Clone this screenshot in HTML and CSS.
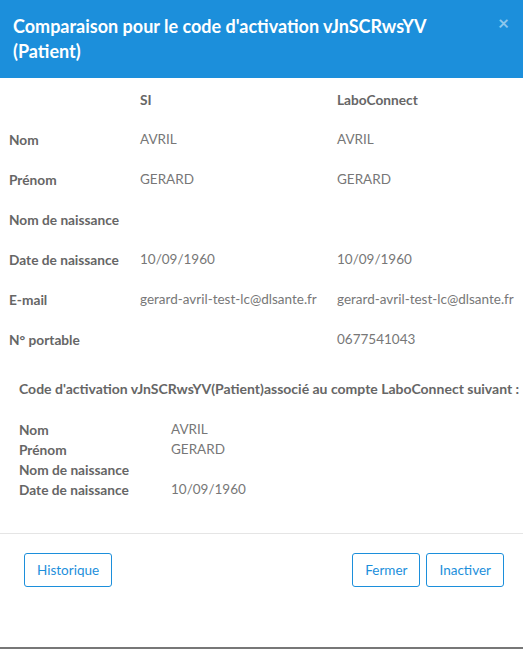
FILE: index.html
```html
<!DOCTYPE html>
<html lang="fr">
<head>
    <meta charset="UTF-8" />
    <title>Comparaison</title>
    <link rel="stylesheet" href="styles.css">
</head>
<body>
    <div class="modal">
        <header class="modal-header">
            <h1>Comparaison pour le code d'activation vJnSCRwsYV (Patient)</h1>
            <span class="close">&times;</span>
        </header>

        <div class="modal-body">
            <div class="compare">
                <div class="cell"></div>
                <div class="cell head">SI</div>
                <div class="cell head">LaboConnect</div>

                <div class="cell label">Nom</div>
                <div class="cell">AVRIL</div>
                <div class="cell">AVRIL</div>

                <div class="cell label">Prénom</div>
                <div class="cell">GERARD</div>
                <div class="cell">GERARD</div>

                <div class="cell label">Nom de naissance</div>
                <div class="cell"></div>
                <div class="cell"></div>

                <div class="cell label">Date de naissance</div>
                <div class="cell">10/09/1960</div>
                <div class="cell">10/09/1960</div>

                <div class="cell label">E-mail</div>
                <div class="cell">gerard-avril-test-lc@dlsante.fr</div>
                <div class="cell">gerard-avril-test-lc@dlsante.fr</div>

                <div class="cell label">N° portable</div>
                <div class="cell"></div>
                <div class="cell">0677541043</div>
            </div>

            <div class="account">
                <h2>Code d'activation vJnSCRwsYV(Patient)associé au compte LaboConnect suivant :</h2>
                <div class="account-list">
                    <div class="label">Nom</div>
                    <div>AVRIL</div>
                    <div class="label">Prénom</div>
                    <div>GERARD</div>
                    <div class="label">Nom de naissance</div>
                    <div></div>
                    <div class="label">Date de naissance</div>
                    <div>10/09/1960</div>
                </div>
            </div>
        </div>

        <footer class="modal-footer">
            <button class="btn">Historique</button>
            <div class="right">
                <button class="btn">Fermer</button>
                <button class="btn">Inactiver</button>
            </div>
        </footer>
    </div>
    <div class="backdrop-edge"></div>
</body>
</html>
```

FILE: styles.css
```css
* {
    box-sizing: border-box;
    margin: 0;
    padding: 0;
}
body {
    font-family: 'Lato', sans-serif;
    font-size: 13.5px;
    color: #777;
    background: #fff;
    width: 523px;
    height: 649px;
    overflow: hidden;
}
.modal {
    height: 647px;
    background: #fff;
}
.modal-header {
    background-color: #1c8fdb;
    color: #fff;
    height: 78px;
    padding: 14px 70px 0 13px;
    position: relative;
}
.modal-header h1 {
    font-size: 18px;
    font-weight: 700;
    line-height: 25px;
}
.close {
    position: absolute;
    top: 11px;
    right: 14px;
    font-size: 19px;
    font-weight: 700;
    color: rgba(255, 255, 255, 0.5);
}
.modal-body {
    height: 456px;
    border-bottom: 1px solid #e5e5e5;
}
.compare {
    display: grid;
    grid-template-columns: 131px 197px 1fr;
    grid-auto-rows: 40px;
    padding: 1px 0 0 9px;
}
.cell {
    display: flex;
    align-items: center;
    white-space: nowrap;
}
.label, .head {
    font-weight: 700;
    color: #666;
    font-size: 13.7px;
}
.account {
    padding: 20px 0 0 19px;
}
.account h2 {
    font-size: 14px;
    font-weight: 700;
    color: #666;
    line-height: 20px;
    margin-bottom: 20px;
    white-space: nowrap;
}
.account-list {
    display: grid;
    grid-template-columns: 152px 1fr;
    grid-auto-rows: 20px;
    align-items: center;
}
.modal-footer {
    display: flex;
    justify-content: space-between;
    padding: 19px 19px 0 24px;
}
.right {
    display: flex;
    gap: 6px;
}
.btn {
    font-family: 'Lato', sans-serif;
    font-size: 13.5px;
    color: #1c8fdb;
    background: #fff;
    border: 1px solid #1c8fdb;
    border-radius: 3px;
    height: 34px;
    padding: 0 12px;
}
.backdrop-edge {
    height: 2px;
    background: #777;
}
```
